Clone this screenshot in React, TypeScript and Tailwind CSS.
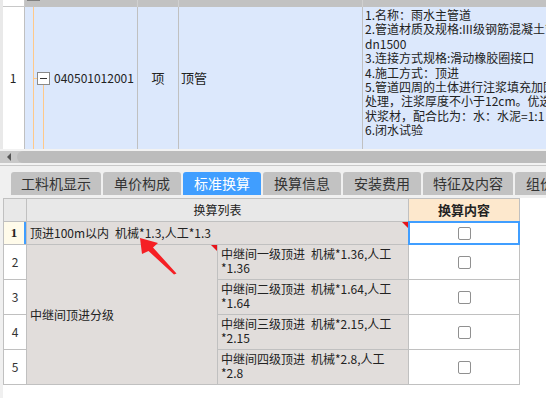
import React from "react";

const FONT = "font-['Noto_Sans_CJK_SC','Noto_Sans',sans-serif]";

const tabs = [
  { label: "工料机显示", w: "w-[90px]" },
  { label: "单价构成", w: "w-[78px]" },
  { label: "标准换算", w: "w-[78px]", active: true },
  { label: "换算信息", w: "w-[78px]" },
  { label: "安装费用", w: "w-[78px]" },
  { label: "特征及内容", w: "w-[90px]" },
  { label: "组价方案", w: "w-[78px]" },
];

const subRows = [
  { n: 2, a: "中继间一级顶进\u2002机械*1.36,人工", b: "*1.36" },
  { n: 3, a: "中继间二级顶进\u2002机械*1.64,人工", b: "*1.64" },
  { n: 4, a: "中继间三级顶进\u2002机械*2.15,人工", b: "*2.15" },
  { n: 5, a: "中继间四级顶进\u2002机械*2.8,人工", b: "*2.8" },
];

const descLines = [
  "1.名称：雨水主管道",
  "2.管道材质及规格:III级钢筋混凝土管",
  "dn1500",
  "3.连接方式规格:滑动橡胶圈接口",
  "4.施工方式：顶进",
  "5.管道四周的土体进行注浆填充加固",
  "处理，注浆厚度不小于12cm。优选水泥",
  "状浆材，配合比为：水：水泥=1:1",
  "6.闭水试验",
];

function Checkbox() {
  return <div className="w-[13px] h-[13px] border border-[#909090] rounded-[2px] bg-white" />;
}

function RedCorner() {
  return (
    <div className="absolute top-0 right-0 w-0 h-0 border-t-[6px] border-t-[#e8141b] border-l-[6px] border-l-transparent" />
  );
}

export default function App() {
  return (
    <div className={`relative w-[546px] h-[398px] overflow-hidden bg-white text-[12px] text-[#222] ${FONT}`}>
      {/* upper list */}
      <div className="flex flex-col h-[149px]">
        <div className="flex h-[7px]">
          <div className="w-[3px] bg-[#e9e9e9]" />
          <div className="w-[22px] bg-white border-r border-b border-[#c8c8c8]" />
          <div className="w-[113px] bg-[#c2c2c2] border-r border-[#d0d0d0]">
            <div className="ml-[2px] w-[13px] h-[1px] bg-[#808080]" />
          </div>
          <div className="w-[41px] bg-[#c2c2c2] border-r border-[#d0d0d0]" />
          <div className="w-[184px] bg-[#c2c2c2] border-r border-[#d0d0d0]" />
          <div className="flex-1 bg-[#c2c2c2]" />
        </div>
        <div className="flex flex-1">
          <div className="w-[3px] bg-[#e9e9e9]" />
          <div className="w-[22px] bg-white border-r border-[#c0c0c0] flex items-center justify-center pr-[1px]">
            1
          </div>
          <div className="relative w-[113px] bg-[#dce8fc] border-r border-[#c0c0c0] flex items-center pl-[12px]">
            <div className="absolute left-[8px] top-0 bottom-0 w-px bg-[#ffc98a]" />
            <div className="absolute left-[8px] top-[71px] w-[4px] h-px bg-[#ffc98a]" />
            <div className="absolute left-[18px] top-[77px] bottom-0 w-px bg-[#ffc98a]" />
            <div className="relative w-[13px] h-[13px] border border-[#8a8a8a] bg-white flex items-center justify-center">
              <div className="w-[7px] h-px bg-[#333]" />
            </div>
            <span className="ml-[4px]">040501012001</span>
          </div>
          <div className="w-[41px] bg-[#dce8fc] border-r border-[#c0c0c0] flex items-center justify-center text-[13px]">
            项
          </div>
          <div className="w-[184px] bg-[#dce8fc] border-r border-[#c0c0c0] flex items-center pl-[2px] text-[13px]">
            顶管
          </div>
          <div className="flex-1 bg-[#dce8fc] overflow-hidden pl-[2px] pt-[1px] leading-[14.4px] whitespace-nowrap">
            {descLines.map((l) => (
              <div key={l}>{l}</div>
            ))}
          </div>
        </div>
      </div>

      {/* scrollbar */}
      <div className="h-[2px] bg-[#f2f2f2]" />
      <div className="flex h-[12px] bg-[#c8c8c8] items-center">
        <div className="w-[17px] flex items-center pl-[7px]">
          <div className="w-0 h-0 border-y-[4px] border-y-transparent border-r-[4px] border-r-[#555]" />
        </div>
        <div className="flex-1 h-full rounded-l-[6px] bg-[#bcbcbc]" />
      </div>
      <div className="h-[2px] bg-[#f2f2f2]" />
      <div className="h-px bg-[#c8c8c8]" />

      {/* tabs */}
      <div className="flex items-end gap-[2px] pl-[11px] pt-[6px] pb-[3px] bg-[#f0f0f0]">
        {tabs.map((t) => (
          <div
            key={t.label}
            className={`${t.w} shrink-0 h-[23px] rounded-t-[3px] flex items-center justify-center text-[14px] ${
              t.active ? "bg-[#409eff] text-white" : "bg-[#c2c2c2] text-[#333]"
            }`}
          >
            {t.label}
          </div>
        ))}
      </div>

      {/* conversion table */}
      <div className="flex">
        <div className="w-[3px] h-[200px] bg-[#f0f0f0]" />
        <div className="grid grid-cols-[22px_190px_190px_110px] grid-rows-[22px_22px_34px_34px_34px_34px] gap-px bg-[#c0c0c0] border border-[#c0c0c0] w-max h-max">
          <div className="bg-[#e8e8e8]" />
          <div className="col-span-2 bg-[#e8e8e8] flex items-center justify-center">换算列表</div>
          <div className="bg-[#fde8cd] flex items-center justify-center font-bold text-[13px]">换算内容</div>

          <div className="bg-[#fffbea] border-r-2 border-[#409eff] flex items-center justify-center font-bold font-['Liberation_Serif',serif] text-[13px]">
            1
          </div>
          <div className="relative col-span-2 bg-[#e1dddb] flex items-center pl-[3px]">
            顶进100m以内{"\u2002"}机械*1.3,人工*1.3
            <RedCorner />
          </div>
          <div className="relative z-10 bg-white flex items-center justify-center outline-2 outline-[#409eff] -outline-offset-1">
            <Checkbox />
          </div>

          {subRows.map((r, i) => (
            <React.Fragment key={r.n}>
              <div className="bg-white flex items-center justify-center text-[#333]">{r.n}</div>
              {i === 0 && (
                <div className="relative row-span-4 bg-[#e1dddb] flex items-center pl-[3px]">
                  中继间顶进分级
                  <RedCorner />
                </div>
              )}
              <div className="bg-[#e1dddb] pl-[3px] pt-[2px] leading-[14px] whitespace-nowrap">
                <div>{r.a}</div>
                <div>{r.b}</div>
              </div>
              <div className="bg-white flex items-center justify-center">
                <Checkbox />
              </div>
            </React.Fragment>
          ))}
        </div>
      </div>

      {/* annotation arrow */}
      <svg className="absolute left-0 top-0 pointer-events-none" width="546" height="398">
        <polygon
          points="140,238 158,243 153,247.5 176.5,273.5 174,274.5 148.5,251 142,254"
          fill="#f51f24"
        />
      </svg>
    </div>
  );
}
